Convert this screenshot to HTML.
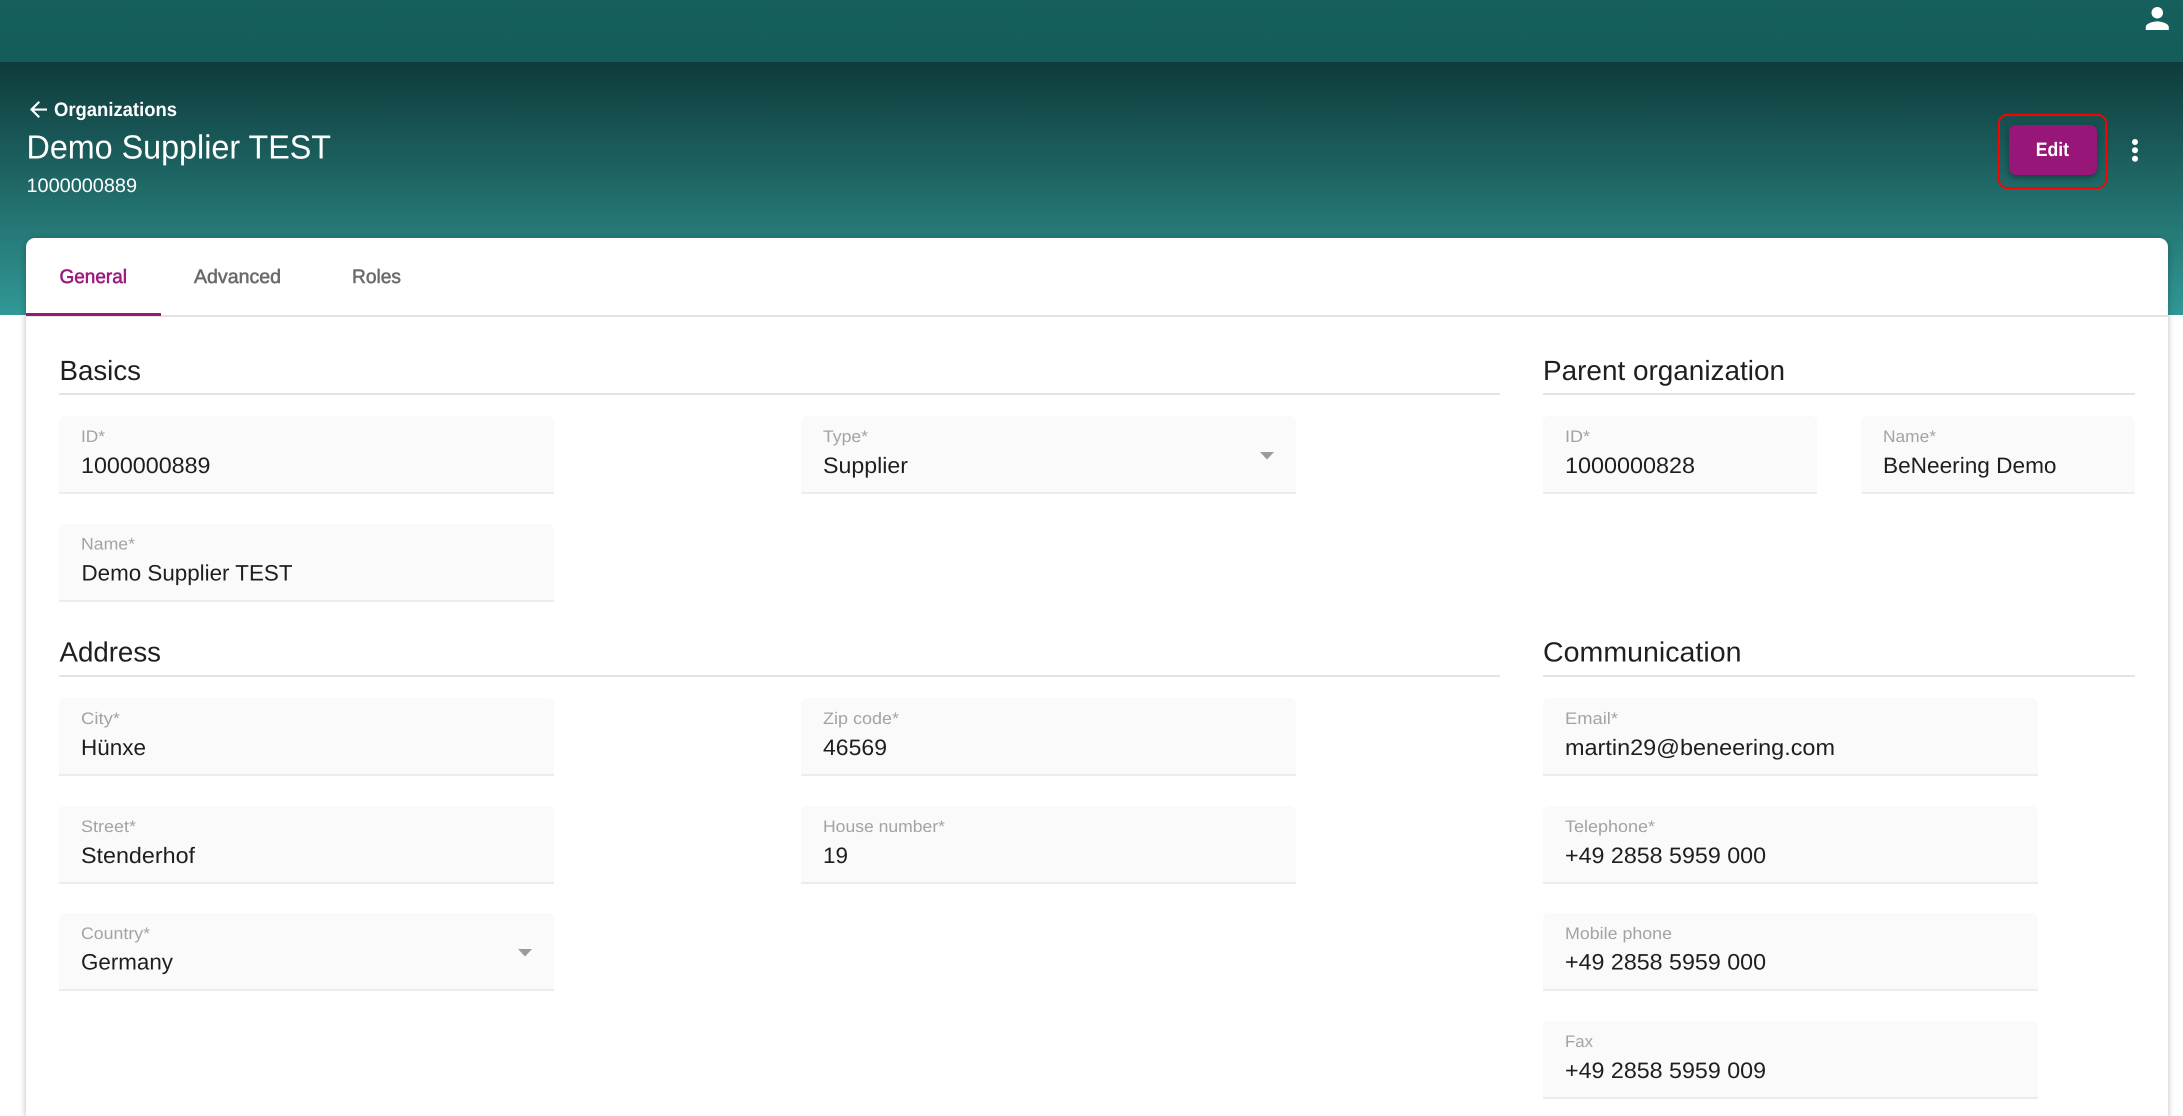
<!DOCTYPE html>
<html lang="en">
<head>
<meta charset="utf-8">
<title>Demo Supplier TEST</title>
<style>
html,body{margin:0;padding:0;background:#fff;width:2183px;height:1116px;overflow:hidden}
body{font-family:"Liberation Sans",sans-serif}
#w{position:relative;width:2183px;height:1116px;overflow:hidden}
.a{position:absolute}
.f{position:absolute;background:#fafafa;border-radius:6px 6px 0 0;height:76px;border-bottom:2px solid #ececec}
.d{position:absolute;height:2px;background:#e4e4e4}
svg.t{position:absolute;left:0;top:0;width:2183px;height:1116px}
svg.t text{font-family:"Liberation Sans",sans-serif;text-rendering:geometricPrecision}
.h{font-size:27.8px;fill:#1f1f1f}
.l{font-size:16.7px;fill:#a3a3a3}
.v{font-size:22.3px;fill:#1e1e1e}
.tab{font-size:19.5px;stroke-width:.55px}
</style>
</head>
<body>
<div id="w">
<div class="a" style="left:0;top:0;width:2183px;height:62px;background:linear-gradient(#155f5d,#145c5a)"></div>
<div class="a" style="left:0;top:62px;width:2183px;height:253px;background:linear-gradient(#0e3b3b,#319895)"></div>

<div class="a" style="left:26px;top:238px;width:2142px;height:878px;background:#fff;border-radius:9px 9px 0 0;box-shadow:0 2px 7px rgba(0,0,0,.28)"></div>
<div class="a" style="left:26px;top:315px;width:2142px;height:2px;background:#e4e4e4"></div>
<div class="a" style="left:26px;top:313px;width:135px;height:3px;background:#9c157b"></div>

<div class="d" style="left:59px;top:393px;width:1441px"></div>
<div class="d" style="left:1543px;top:393px;width:592px"></div>
<div class="d" style="left:59px;top:675px;width:1441px"></div>
<div class="d" style="left:1543px;top:675px;width:592px"></div>

<div class="f" style="left:59px;top:416px;width:495px"></div>
<div class="f" style="left:59px;top:524px;width:495px"></div>
<div class="f" style="left:801px;top:416px;width:495px"></div>
<div class="f" style="left:1543px;top:416px;width:274px"></div>
<div class="f" style="left:1861px;top:416px;width:274px"></div>

<div class="f" style="left:59px;top:698px;width:495px"></div>
<div class="f" style="left:59px;top:806px;width:495px"></div>
<div class="f" style="left:59px;top:913px;width:495px"></div>
<div class="f" style="left:801px;top:698px;width:495px"></div>
<div class="f" style="left:801px;top:806px;width:495px"></div>

<div class="f" style="left:1543px;top:698px;width:495px"></div>
<div class="f" style="left:1543px;top:806px;width:495px"></div>
<div class="f" style="left:1543px;top:913px;width:495px"></div>
<div class="f" style="left:1543px;top:1021px;width:495px"></div>

<div class="a" style="left:2009px;top:125px;width:88px;height:50px;background:#981677;border-radius:7px;box-shadow:0 3px 5px rgba(0,0,0,.25),0 1px 10px rgba(0,0,0,.12)"></div>
<div class="a" style="left:1998px;top:114px;width:105px;height:71px;border:2px solid #f00;border-radius:9px"></div>

<svg class="t" viewBox="0 0 2183 1116" xmlns="http://www.w3.org/2000/svg">
  <g fill="#fff">
    <path transform="translate(2140 1.2) scale(1.44)" d="M12 12c2.21 0 4-1.79 4-4s-1.79-4-4-4-4 1.79-4 4 1.79 4 4 4zm0 2c-2.67 0-8 1.34-8 4v2h16v-2c0-2.66-5.33-4-8-4z"/>
    <path transform="translate(25.75 96.75) scale(1.0625)" d="M20 11H7.83l5.59-5.59L12 4l-8 8 8 8 1.41-1.41L7.83 13H20v-2z"/>
    <circle cx="2135" cy="142" r="3"/><circle cx="2135" cy="150.3" r="3"/><circle cx="2135" cy="158.7" r="3"/>
  </g>
  <g fill="#9b9b9b">
    <path d="M1260 452h14l-7 7.5z"/>
    <path d="M518 949h14l-7 7.5z"/>
  </g>

  <g fill="#fff">
    <text x="54" y="116" font-size="19.5" font-weight="700" textLength="123" lengthAdjust="spacingAndGlyphs">Organizations</text>
    <text x="26.5" y="158.7" font-size="33.4" textLength="304.5" lengthAdjust="spacingAndGlyphs">Demo Supplier TEST</text>
    <text x="26.5" y="192" font-size="19.5" textLength="110.5" lengthAdjust="spacingAndGlyphs">1000000889</text>
    <text x="2035.7" y="156" font-size="19.5" font-weight="700" textLength="33.3" lengthAdjust="spacingAndGlyphs">Edit</text>
  </g>

  <text class="tab" x="59.5" y="283" fill="#9c1a7c" stroke="#9c1a7c" textLength="67.5" lengthAdjust="spacingAndGlyphs">General</text>
  <text class="tab" x="194" y="283" fill="#6a6a6a" stroke="#6a6a6a" textLength="87" lengthAdjust="spacingAndGlyphs">Advanced</text>
  <text class="tab" x="352" y="283" fill="#6a6a6a" stroke="#6a6a6a" textLength="49" lengthAdjust="spacingAndGlyphs">Roles</text>

  <text class="h" x="59.5" y="380" textLength="81.5" lengthAdjust="spacingAndGlyphs">Basics</text>
  <text class="h" x="59.5" y="661.7" textLength="101.5" lengthAdjust="spacingAndGlyphs">Address</text>
  <text class="h" x="1543" y="380" textLength="242" lengthAdjust="spacingAndGlyphs">Parent organization</text>
  <text class="h" x="1543" y="661.7" textLength="198.5" lengthAdjust="spacingAndGlyphs">Communication</text>

  <text class="l" x="81" y="442" textLength="24" lengthAdjust="spacingAndGlyphs">ID*</text>
  <text class="v" x="81" y="473" textLength="129.5" lengthAdjust="spacingAndGlyphs">1000000889</text>
  <text class="l" x="81" y="549.3" textLength="54" lengthAdjust="spacingAndGlyphs">Name*</text>
  <text class="v" x="81.5" y="580.7" textLength="211" lengthAdjust="spacingAndGlyphs">Demo Supplier TEST</text>

  <text class="l" x="823" y="442" textLength="45" lengthAdjust="spacingAndGlyphs">Type*</text>
  <text class="v" x="823" y="473" textLength="85" lengthAdjust="spacingAndGlyphs">Supplier</text>

  <text class="l" x="1565" y="442" textLength="25" lengthAdjust="spacingAndGlyphs">ID*</text>
  <text class="v" x="1565" y="473" textLength="130" lengthAdjust="spacingAndGlyphs">1000000828</text>
  <text class="l" x="1883" y="442" textLength="53" lengthAdjust="spacingAndGlyphs">Name*</text>
  <text class="v" x="1883" y="473" textLength="173.5" lengthAdjust="spacingAndGlyphs">BeNeering Demo</text>

  <text class="l" x="81" y="724" textLength="39" lengthAdjust="spacingAndGlyphs">City*</text>
  <text class="v" x="81" y="755" textLength="65" lengthAdjust="spacingAndGlyphs">Hünxe</text>
  <text class="l" x="81" y="832" textLength="55" lengthAdjust="spacingAndGlyphs">Street*</text>
  <text class="v" x="81" y="863" textLength="114" lengthAdjust="spacingAndGlyphs">Stenderhof</text>
  <text class="l" x="81" y="939" textLength="69" lengthAdjust="spacingAndGlyphs">Country*</text>
  <text class="v" x="81" y="969.5" textLength="92" lengthAdjust="spacingAndGlyphs">Germany</text>

  <text class="l" x="823" y="724" textLength="76" lengthAdjust="spacingAndGlyphs">Zip code*</text>
  <text class="v" x="823" y="755" textLength="64" lengthAdjust="spacingAndGlyphs">46569</text>
  <text class="l" x="823" y="832" textLength="122" lengthAdjust="spacingAndGlyphs">House number*</text>
  <text class="v" x="823" y="863" textLength="25" lengthAdjust="spacingAndGlyphs">19</text>

  <text class="l" x="1565" y="724" textLength="53" lengthAdjust="spacingAndGlyphs">Email*</text>
  <text class="v" x="1565" y="755" textLength="270" lengthAdjust="spacingAndGlyphs">martin29@beneering.com</text>
  <text class="l" x="1565" y="832" textLength="90" lengthAdjust="spacingAndGlyphs">Telephone*</text>
  <text class="v" x="1565" y="863" textLength="201" lengthAdjust="spacingAndGlyphs">+49 2858 5959 000</text>
  <text class="l" x="1565" y="939" textLength="107" lengthAdjust="spacingAndGlyphs">Mobile phone</text>
  <text class="v" x="1565" y="969.5" textLength="201" lengthAdjust="spacingAndGlyphs">+49 2858 5959 000</text>
  <text class="l" x="1565" y="1047" textLength="28" lengthAdjust="spacingAndGlyphs">Fax</text>
  <text class="v" x="1565" y="1078" textLength="201" lengthAdjust="spacingAndGlyphs">+49 2858 5959 009</text>
</svg>
</div>
</body>
</html>
